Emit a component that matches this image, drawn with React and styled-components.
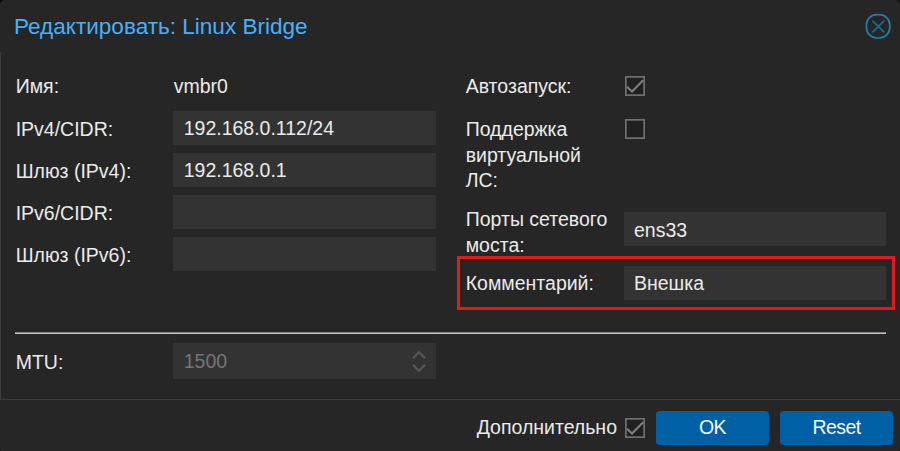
import React from "react";
import styled, { createGlobalStyle } from "styled-components";

const GlobalStyle = createGlobalStyle`
  body {
    margin: 0;
    background: #0d0d0d;
    font-family: "Liberation Sans", Arial, sans-serif;
  }
  * { box-sizing: border-box; }
`;

const Dialog = styled.div`
  display: flex;
  flex-direction: column;
  width: 900px;
  height: 451px;
  overflow: hidden;
  border-radius: 5px 5px 2px 2px;
  background: #262626;
  color: #ebebeb;
  font-size: 19.5px;
`;

const Header = styled.header`
  display: flex;
  align-items: center;
  justify-content: space-between;
  flex: none;
  height: 52px;
  padding: 0 9px 0 14px;
`;

const Title = styled.h1`
  margin: 0;
  color: #49aff9;
  font-size: 22.55px;
  font-weight: 400;
  line-height: 50px;
  padding-top: 2px;
`;

const CloseButton = styled.button`
  width: 26px;
  height: 26px;
  padding: 0;
  border: 0;
  background: none;
  svg { display: block; }
`;

const Body = styled.main`
  flex: none;
  height: 348px;
  padding: 17px 14px 0 14px;
  border: solid #3b3b3b;
  border-width: 0 0 1px 1px;
`;

const Columns = styled.div`
  display: flex;
  gap: 29px;
  height: 263px;
`;

const Column = styled.div`
  display: flex;
  flex-direction: column;
  gap: 8px;
  width: ${(p) => p.$width}px;
`;

const Row = styled.div`
  display: flex;
  align-items: ${(p) => p.$align || "center"};
  height: ${(p) => p.$height || 34}px;
  flex: none;
`;

const Label = styled.label`
  flex: none;
  width: ${(p) => p.$width || 158}px;
  padding: ${(p) => p.$drop || 0}px 14px 0 0.7px;
  line-height: 25.6px;
`;

const Value = styled.span`
  padding-left: 0.7px;
`;

const Field = styled.div`
  display: flex;
  align-items: center;
  justify-content: space-between;
  flex: none;
  width: ${(p) => p.$width || 262.5}px;
  height: ${(p) => p.$height || 34}px;
  padding: ${(p) => p.$drop || 0}px 10px 0 ${(p) => p.$inset || 10.7}px;
  background: #333;
  color: ${(p) => (p.$disabled ? "#757575" : "#ebebeb")};
`;

const Highlight = styled(Row)`
  width: 438px;
  height: 54px;
  margin: -6px 0 0 -8px;
  padding-left: 5px;
  border: 3.5px solid #e61919;
`;

const Divider = styled.hr`
  height: 2px;
  margin: 0 0 9px;
  border: 0;
  background: linear-gradient(#858585 50%, #c4c4c4 50%);
`;

const Footer = styled.footer`
  display: flex;
  align-items: center;
  justify-content: flex-end;
  flex: 1;
  padding: 5px 7px 0 0;
`;

const FooterLabel = styled.span`
  margin: 0 8px 1px 0;
`;

const Button = styled.button`
  width: 113px;
  height: 34px;
  margin-left: 11px;
  padding: 0 0 2px;
  border: 0;
  border-radius: 4px;
  background: #0060a6;
  color: #f5f8fb;
  font: 19.5px "Liberation Sans", Arial, sans-serif;
  letter-spacing: ${(p) => p.$tracking || 0}px;
`;

const CheckIcon = ({ checked }) => (
  <svg width="20" height="20" viewBox="0 0 20 20" fill="none">
    <rect x=".85" y=".85" width="18.3" height="18.3" fill="#202020" stroke="#707070" strokeWidth="1.7" />
    {checked && <path d="M2 10.8L7 15.5L18.2 4.3" stroke="#808080" strokeWidth="2" />}
  </svg>
);

const CloseIcon = () => (
  <svg width="26" height="26" viewBox="0 0 26 26" fill="none">
    <rect x="1.4" y="1.6" width="23.4" height="23.4" rx="10.5" stroke="#267da4" strokeWidth="1.7" />
    <path d="M7.4 7.6L19.2 19.4M19.2 7.6L7.4 19.4" stroke="#146b94" strokeWidth="1.7" />
  </svg>
);

const SpinnerIcon = () => (
  <svg width="14" height="24" viewBox="0 0 14 24" fill="none" stroke="#575757" strokeWidth="2.2">
    <path d="M1 8.2L7 2.1L13 8.2M1 14.8L7 20.9L13 14.8" />
  </svg>
);

const addresses = [
  ["IPv4/CIDR:", "192.168.0.112/24"],
  ["Шлюз (IPv4):", "192.168.0.1"],
  ["IPv6/CIDR:", ""],
  ["Шлюз (IPv6):", ""],
];

export default function App() {
  return (
    <>
      <GlobalStyle />
      <Dialog>
        <Header>
          <Title>Редактировать: Linux Bridge</Title>
          <CloseButton aria-label="Закрыть"><CloseIcon /></CloseButton>
        </Header>
        <Body>
          <Columns>
            <Column $width={421}>
              <Row>
                <Label $drop={1}>Имя:</Label>
                <Value>vmbr0</Value>
              </Row>
              {addresses.map(([label, value]) => (
                <Row key={label}>
                  <Label $drop={3}>{label}</Label>
                  <Field>{value}</Field>
                </Row>
              ))}
            </Column>
            <Column $width={421}>
              <Row>
                <Label $width={160} $drop={1}>Автозапуск:</Label>
                <CheckIcon checked />
              </Row>
              <Row $height={85} $align="flex-start">
                <Label $width={160} $drop={6}>Поддержка виртуальной ЛС:</Label>
                <Row $height={36}><CheckIcon /></Row>
              </Row>
              <Row $height={50}>
                <Label $width={159} $drop={7}>Порты сетевого моста:</Label>
                <Field $width={261.5} $inset={10} $drop={2}>ens33</Field>
              </Row>
              <Highlight>
                <Label $width={159} $drop={2}>Комментарий:</Label>
                <Field $width={261.5} $inset={10}>Внешка</Field>
              </Highlight>
            </Column>
          </Columns>
          <Divider />
          <Row $height={36}>
            <Label $drop={4}>MTU:</Label>
            <Field $height={36} $drop={1} $disabled>1500<SpinnerIcon /></Field>
          </Row>
        </Body>
        <Footer>
          <FooterLabel>Дополнительно</FooterLabel>
          <CheckIcon checked />
          <Button $tracking={-0.5}>OK</Button>
          <Button $tracking={-0.6}>Reset</Button>
        </Footer>
      </Dialog>
    </>
  );
}
